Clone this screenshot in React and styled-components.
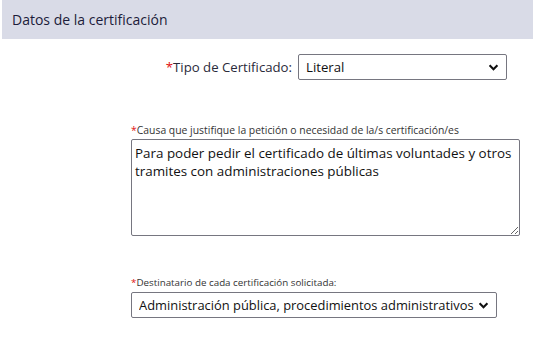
import React from "react";
import styled, { createGlobalStyle } from "styled-components";

const Global = createGlobalStyle`
  html, body { margin: 0; padding: 0; background: #fff; }
  body { font-family: "Open Sans", "Noto Sans", sans-serif; color: #222; }
  * { box-sizing: border-box; }
`;

const Page = styled.div`
  width: 533px;
  height: 351px;
  padding-left: 2px;
  overflow: hidden;
`;

const Header = styled.div`
  height: 39px;
  background: #d9dbe7;
  display: flex;
  align-items: center;
  padding-left: 10px;
  font-size: 14px;
  color: #1c1c3a;
`;

const Body = styled.div`
  padding-left: 129px;
  display: flex;
  flex-direction: column;
`;

const InlineRow = styled.div`
  width: 376px;
  margin-top: 15px;
  display: flex;
  justify-content: flex-end;
  align-items: center;
  gap: 6px;
  font-size: 13.2px;
`;

const Star = styled.span`
  color: #e01010;
`;

const Label = styled.label`
  color: #2a2a3a;
  white-space: nowrap;
`;

const SmallLabel = styled.label`
  display: block;
  font-size: ${(p) => p.$size}px;
  line-height: 14px;
  color: #333;
  margin-top: ${(p) => p.$top}px;
  margin-bottom: 2px;
  white-space: nowrap;
`;

const chevron =
  "url(\"data:image/svg+xml;utf8,<svg xmlns='http://www.w3.org/2000/svg' width='12' height='8' viewBox='0 0 12 8'><path d='M1.5 1.5 L6 6 L10.5 1.5' fill='none' stroke='%23111' stroke-width='2.4'/></svg>\")";

const Select = styled.select`
  appearance: none;
  -webkit-appearance: none;
  width: ${(p) => p.$w}px;
  height: 26px;
  border: 1px solid #767680;
  border-radius: 2px;
  background: #fff ${chevron} no-repeat right 7px center;
  background-size: 11px 7px;
  font-family: "Open Sans", "Noto Sans", sans-serif;
  font-size: ${(p) => p.$fs}px;
  color: #111;
  padding: 0 16px 0 ${(p) => p.$pl}px;
  outline: none;
`;

const TextArea = styled.textarea`
  width: 389px;
  height: 97px;
  border: 1px solid #767680;
  border-radius: 2px;
  font-family: "Open Sans", "Noto Sans", sans-serif;
  font-size: 13.4px;
  line-height: 17.5px;
  color: #111;
  padding: 5px 3px;
  resize: both;
  outline: none;
  display: block;
`;

export default function App() {
  return (
    <Page>
      <Global />
      <Header>Datos de la certificación</Header>
      <Body>
        <InlineRow>
          <Label>
            <Star>*</Star>Tipo de Certificado:
          </Label>
          <Select $w={209} $pl={7} $fs={13.2} defaultValue="literal">
            <option value="literal">Literal</option>
            <option value="extracto">Extracto</option>
          </Select>
        </InlineRow>
        <SmallLabel $top={43} $size={10.4}>
          <Star>*</Star>Causa que justifique la petición o necesidad de la/s certificación/es
        </SmallLabel>
        <TextArea defaultValue="Para poder pedir el certificado de últimas voluntades y otros tramites con administraciones públicas" />
        <SmallLabel $top={40} $size={9.8}>
          <Star>*</Star>Destinatario de cada certificación solicitada:
        </SmallLabel>
        <Select $w={366} $pl={7} $fs={12.9} defaultValue="admin">
          <option value="admin">Administración pública, procedimientos administrativos</option>
        </Select>
      </Body>
    </Page>
  );
}
